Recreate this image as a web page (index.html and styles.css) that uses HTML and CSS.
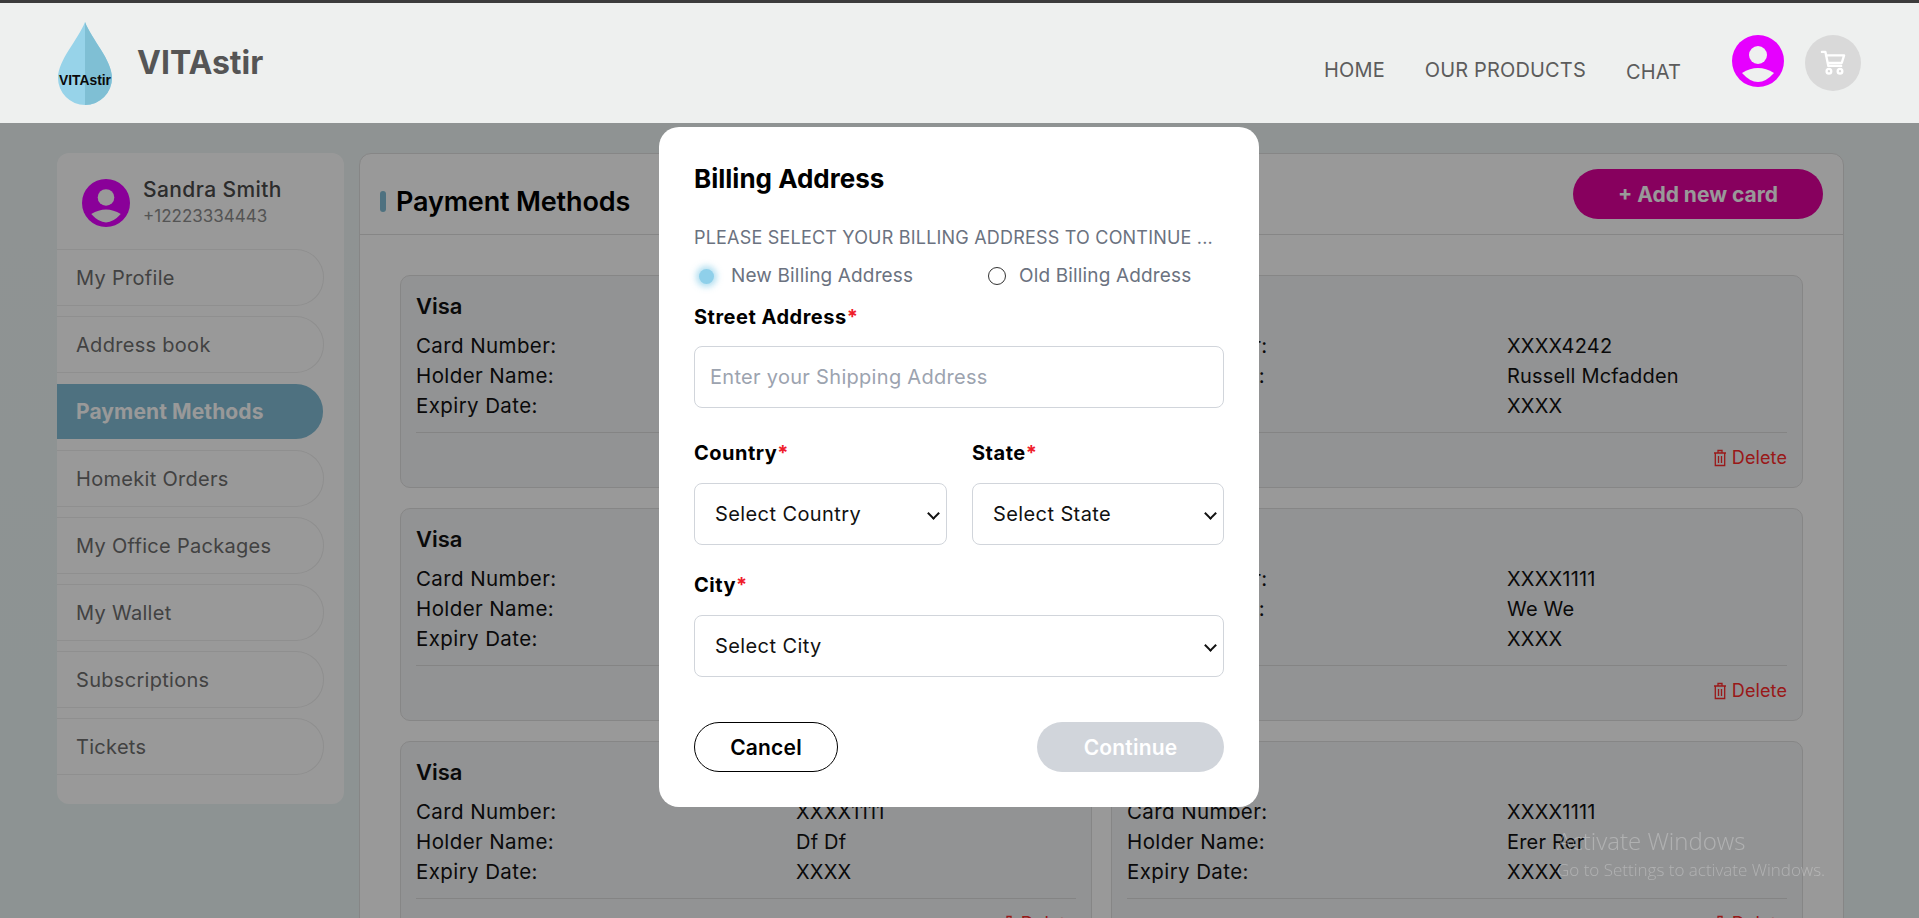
FILE: index.html
```html
<!DOCTYPE html>
<html lang="en">
<head>
    <meta charset="UTF-8">
    <meta name="viewport" content="width=device-width, initial-scale=1.0">
    <title>VITAstir - Payment Methods</title>

    <link rel="stylesheet" href="styles.css">
</head>
<body>

    <header class="topbar">
        <svg class="logo" viewBox="0 0 54 83" width="54" height="83">
            <path d="M27 0C20 18 0 38 0 56a27 27 0 0 0 54 0C54 38 34 18 27 0Z" fill="#97d3e9"/>
            <path d="M27 0C34 18 54 38 54 56a27 27 0 0 1-27 27Z" fill="#7fbfd4"/>
            <text x="1" y="63" class="logo-text" textLength="52" lengthAdjust="spacingAndGlyphs">VITAstir</text>
        </svg>
        <div class="brand">VITAstir</div>
        <nav class="nav">
            <a href="#">HOME</a>
            <a href="#">OUR PRODUCTS</a>
            <a href="#" class="nav-chat">CHAT</a>
        </nav>
        <svg class="profile-icon" viewBox="0 0 52 52" width="52" height="52">
            <circle cx="26" cy="26" r="26" fill="#e600ff"/>
            <circle cx="26" cy="20" r="9" fill="#eef0ef"/>
            <path d="M10 38Q26 28 42 38Q34 47 26 47Q18 47 10 38Z" fill="#eef0ef"/>
        </svg>
        <div class="cart">
            <svg viewBox="0 0 24 24" width="28" height="28" fill="none" stroke="#fff" stroke-width="2" stroke-linecap="round" stroke-linejoin="round">
                <path d="M2.500 2.500h3l2.500 12h11M6 5.500h15.500l-2 6.500H7.500"/>
                <circle cx="8.500" cy="19" r="2"/>
                <circle cx="18" cy="19" r="2"/>
            </svg>
        </div>
    </header>

    <div class="page">
        <aside class="sidebar">
            <div class="user">
                <svg viewBox="0 0 52 52" width="48" height="48">
                    <circle cx="26" cy="26" r="26" fill="#e600ff"/>
                    <circle cx="26" cy="20" r="9" fill="#fff"/>
                    <path d="M10 38Q26 28 42 38Q34 47 26 47Q18 47 10 38Z" fill="#fff"/>
                </svg>
                <div>
                    <div class="user-name">Sandra Smith</div>
                    <div class="user-phone">+12223334443</div>
                </div>
            </div>
            <a href="#" class="side-link">My Profile</a>
            <a href="#" class="side-link">Address book</a>
            <a href="#" class="side-link active">Payment Methods</a>
            <a href="#" class="side-link">Homekit Orders</a>
            <a href="#" class="side-link">My Office Packages</a>
            <a href="#" class="side-link">My Wallet</a>
            <a href="#" class="side-link">Subscriptions</a>
            <a href="#" class="side-link">Tickets</a>
        </aside>

        <main class="panel">
            <div class="panel-head">
                <h2 class="panel-title">Payment Methods</h2>
                <button class="add-card">+ Add new card</button>
            </div>
            <div class="cards">
                <div class="card">
                    <div class="card-type">Visa</div>
                    <div class="card-rows">
                        <span>Card Number:</span><span></span>
                        <span>Holder Name:</span><span></span>
                        <span>Expiry Date:</span><span></span>
                    </div>
                </div>
                <div class="card">
                    <div class="card-type">Visa</div>
                    <div class="card-rows">
                        <span>Card Number:</span><span>XXXX4242</span>
                        <span>Holder Name:</span><span>Russell Mcfadden</span>
                        <span>Expiry Date:</span><span>XXXX</span>
                    </div>
                    <div class="card-foot"><a href="#" class="delete">
                        <svg viewBox="0 0 14 18" width="14" height="18" fill="none" stroke="currentColor" stroke-width="1.300"><path d="M1 4h12M5 4V1.500h4V4M2.300 4v12.500h9.400V4M5.500 7v7M8.500 7v7"/></svg>
                        Delete</a></div>
                </div>
                <div class="card">
                    <div class="card-type">Visa</div>
                    <div class="card-rows">
                        <span>Card Number:</span><span></span>
                        <span>Holder Name:</span><span></span>
                        <span>Expiry Date:</span><span></span>
                    </div>
                </div>
                <div class="card">
                    <div class="card-type">Visa</div>
                    <div class="card-rows">
                        <span>Card Number:</span><span>XXXX1111</span>
                        <span>Holder Name:</span><span>We We</span>
                        <span>Expiry Date:</span><span>XXXX</span>
                    </div>
                    <div class="card-foot"><a href="#" class="delete">
                        <svg viewBox="0 0 14 18" width="14" height="18" fill="none" stroke="currentColor" stroke-width="1.300"><path d="M1 4h12M5 4V1.500h4V4M2.300 4v12.500h9.400V4M5.500 7v7M8.500 7v7"/></svg>
                        Delete</a></div>
                </div>
                <div class="card">
                    <div class="card-type">Visa</div>
                    <div class="card-rows">
                        <span>Card Number:</span><span>XXXX1111</span>
                        <span>Holder Name:</span><span>Df Df</span>
                        <span>Expiry Date:</span><span>XXXX</span>
                    </div>
                    <div class="card-foot"><a href="#" class="delete">
                        <svg viewBox="0 0 14 18" width="14" height="18" fill="none" stroke="currentColor" stroke-width="1.300"><path d="M1 4h12M5 4V1.500h4V4M2.300 4v12.500h9.400V4M5.500 7v7M8.500 7v7"/></svg>
                        Delete</a></div>
                </div>
                <div class="card">
                    <div class="card-type">Visa</div>
                    <div class="card-rows">
                        <span>Card Number:</span><span>XXXX1111</span>
                        <span>Holder Name:</span><span>Erer Rer</span>
                        <span>Expiry Date:</span><span>XXXX</span>
                    </div>
                    <div class="card-foot"><a href="#" class="delete">
                        <svg viewBox="0 0 14 18" width="14" height="18" fill="none" stroke="currentColor" stroke-width="1.300"><path d="M1 4h12M5 4V1.500h4V4M2.300 4v12.500h9.400V4M5.500 7v7M8.500 7v7"/></svg>
                        Delete</a></div>
                </div>
            </div>
        </main>
    </div>

    <div class="overlay">
        <form class="modal">
            <h3 class="modal-title">Billing Address</h3>
            <p class="modal-sub">PLEASE SELECT YOUR BILLING ADDRESS TO CONTINUE ...</p>
            <div class="radios">
                <label class="radio"><input type="radio" name="billing" class="radio-new" checked> New Billing Address</label>
                <label class="radio"><input type="radio" name="billing"> Old Billing Address</label>
            </div>

            <label class="field-label street-label">Street Address<span class="req">*</span></label>
            <input class="control" type="text" placeholder="Enter your Shipping Address">

            <div class="two-col">
                <div>
                    <label class="field-label">Country<span class="req">*</span></label>
                    <div class="select-wrap"><select class="control"><option>Select Country</option></select></div>
                </div>
                <div>
                    <label class="field-label">State<span class="req">*</span></label>
                    <div class="select-wrap"><select class="control"><option>Select State</option></select></div>
                </div>
            </div>

            <label class="field-label city-label">City<span class="req">*</span></label>
            <div class="select-wrap"><select class="control"><option>Select City</option></select></div>

            <div class="modal-actions">
                <button type="button" class="btn-cancel">Cancel</button>
                <button type="button" class="btn-continue">Continue</button>
            </div>
        </form>

        <div class="watermark">
            <div class="watermark-big">Activate Windows</div>
            <div class="watermark-small">Go to Settings to activate Windows.</div>
        </div>
    </div>

</body>
</html>
```

FILE: styles.css
```css
* {
    box-sizing: border-box;
}
html, body {
    height: 100%;
    overflow: hidden;
}
body {
    font-family: Inter, "Noto Sans", sans-serif;
    margin: 0;
    padding: 0;
    background: linear-gradient(180deg, #eff5f5, #ebf6f5);
    color: #111;
}
a {
    color: inherit;
    text-decoration: none;
}

/* header sits above the dark overlay */
.topbar {
    position: relative;
    z-index: 20;
    display: flex;
    align-items: center;
    height: 123px;
    border-top: 3px solid #3c3c3c;
    background-color: #eef0ef;
    padding: 0 58px;
}
.logo {
    flex: none;
    overflow: visible;
}
.logo-text {
    font-family: "Liberation Sans", sans-serif;
    font-size: 15px;
    font-weight: 700;
    fill: #0a0a0a;
}
.brand {
    margin-left: 25px;
    margin-bottom: 2px;
    font-size: 32px;
    font-weight: 700;
    color: #555;
}
.nav {
    display: flex;
    gap: 40px;
    margin-left: auto;
    margin-top: 16px;
    font-size: 20px;
    letter-spacing: 0.15px;
    color: #5c5c5c;
}
.nav-chat {
    margin-top: 2px;
}
.profile-icon {
    flex: none;
    align-self: flex-start;
    margin-top: 32px;
    margin-left: 51px;
}
.cart {
    flex: none;
    align-self: flex-start;
    display: flex;
    align-items: center;
    justify-content: center;
    width: 56px;
    height: 56px;
    margin-top: 32px;
    margin-left: 21px;
    border-radius: 50%;
    background-color: #d9d9d9;
}

.page {
    display: flex;
    align-items: flex-start;
    gap: 15px;
    padding: 30px 75px 0 57px;
}

.sidebar {
    flex: none;
    width: 287px;
    padding: 24px 0 19px;
    background-color: #fff;
    border-radius: 12px;
}
.user {
    display: flex;
    align-items: center;
    gap: 13px;
    padding-left: 25px;
    margin-bottom: 20px;
}
.user-name {
    font-size: 21px;
    font-weight: 500;
    letter-spacing: 0.4px;
    color: #4a4a4a;
    line-height: 26px;
}
.user-phone {
    font-size: 17px;
    color: #8c8c8c;
    line-height: 26px;
}
.side-link {
    display: flex;
    align-items: center;
    width: 267px;
    height: 57px;
    margin-bottom: 10px;
    padding-left: 19px;
    font-size: 20px;
    letter-spacing: 0.3px;
    color: #6e6e6e;
    border: 1px solid #eee;
    border-left: none;
    border-radius: 0 28px 28px 0;
}
.side-link.active {
    background-color: #82bdd5;
    background-clip: padding-box;
    border-color: transparent;
    color: #fff;
    font-size: 21px;
    font-weight: 700;
    letter-spacing: 0.1px;
}

.panel {
    flex: 1;
    background-color: #fff;
    border: 1px solid #e0e0e0;
    border-radius: 12px 12px 0 0;
}
.panel-head {
    display: flex;
    align-items: center;
    justify-content: space-between;
    height: 81px;
    padding: 0 20px;
    border-bottom: 1px solid #e0e0e0;
}
.panel-title {
    display: flex;
    align-items: center;
    gap: 10px;
    margin: 15px 0 0;
    font-size: 27px;
    font-weight: 600;
    letter-spacing: -0.15px;
    color: #000;
}
.panel-title::before {
    content: "";
    width: 6px;
    height: 21px;
    border-radius: 3px;
    background-color: #82bdd5;
}
.add-card {
    width: 250px;
    height: 50px;
    border: none;
    border-radius: 25px;
    background-color: #e1009d;
    color: #fff;
    font-family: inherit;
    font-size: 21px;
    font-weight: 700;
}

.cards {
    display: grid;
    grid-template-columns: 1fr 1fr;
    gap: 20px 19px;
    padding: 40px;
}
.card {
    height: 213px;
    padding: 17px 15px 0;
    background-color: #f4f5f7;
    border: 1px solid #e0e0e0;
    border-radius: 10px;
}
.card-type {
    font-size: 22px;
    font-weight: 600;
    line-height: 26px;
    color: #111;
}
.card-rows {
    display: grid;
    grid-template-columns: 380px 1fr;
    grid-auto-rows: 30px;
    margin-top: 12px;
    padding-bottom: 11px;
    border-bottom: 1px solid #dcdcdc;
    font-size: 20px;
    line-height: 30px;
    letter-spacing: 0.2px;
}
.card-rows span:nth-child(odd) {
    font-size: 20.500px;
    letter-spacing: 0.4px;
}
.card-foot {
    display: flex;
    justify-content: flex-end;
    padding-top: 14px;
}
.delete {
    display: flex;
    align-items: center;
    gap: 5px;
    font-size: 18px;
    line-height: 22px;
    letter-spacing: 0.1px;
    color: #ff2a2a;
}

.overlay {
    position: fixed;
    top: 0;
    left: 0;
    right: 0;
    bottom: 0;
    z-index: 10;
    display: flex;
    justify-content: center;
    align-items: flex-start;
    padding: 127px 1px 0 0;
    background-color: rgba(0, 0, 0, 0.4);
}
.modal {
    width: 600px;
    height: 680px;
    padding: 35px;
    background-color: #fff;
    border-radius: 20px;
}
.modal-title {
    margin: 0;
    font-size: 26px;
    font-weight: 700;
    line-height: 34px;
    color: #000;
}
.modal-sub {
    margin: 29px 0 0;
    font-size: 18px;
    letter-spacing: 0.2px;
    line-height: 26px;
    color: #6b7280;
}
.radios {
    display: grid;
    grid-template-columns: 294px 1fr;
    margin-top: 12px;
}
.radio {
    display: flex;
    align-items: center;
    gap: 13px;
    font-size: 19px;
    letter-spacing: 0.15px;
    line-height: 26px;
    color: #6b7280;
}
.radio input {
    appearance: none;
    width: 18px;
    height: 18px;
    margin: 0;
    border: 1px solid #333;
    border-radius: 50%;
    background-color: #fff;
}
.radio input.radio-new {
    width: 15px;
    height: 15px;
    margin: 0 4px 0 5px;
    border: none;
    background-color: #8fd0ea;
    box-shadow: 0 0 6px 3px rgba(143, 208, 234, 0.7);
}
.field-label {
    display: block;
    margin-bottom: 17px;
    font-size: 20px;
    font-weight: 700;
    letter-spacing: 0.5px;
    line-height: 26px;
    color: #000;
}
.street-label {
    margin-top: 15px;
    margin-bottom: 16px;
}
.city-label {
    margin-top: 27px;
}
.req {
    color: #ef1c2b;
}
.control {
    display: block;
    width: 100%;
    height: 62px;
    padding: 0 15px;
    border: 1px solid #d1d5db;
    border-radius: 8px;
    background-color: #fff;
    font-family: inherit;
    font-size: 20px;
    letter-spacing: 0.3px;
    color: #111;
}
.control::placeholder {
    color: #9ca3af;
}
select.control {
    appearance: none;
    padding-left: 20px;
    letter-spacing: 0.4px;
}
.select-wrap {
    position: relative;
}
.select-wrap::after {
    content: "";
    position: absolute;
    top: 50%;
    right: 9px;
    width: 7px;
    height: 7px;
    margin-top: -5px;
    border-right: 2px solid #111;
    border-bottom: 2px solid #111;
    transform: rotate(45deg);
}
.two-col {
    display: grid;
    grid-template-columns: 253px 252px;
    gap: 25px;
    margin-top: 32px;
}
.modal-actions {
    display: flex;
    justify-content: space-between;
    margin-top: 45px;
}
.btn-cancel, .btn-continue {
    height: 50px;
    border-radius: 25px;
    font-family: inherit;
    font-size: 21px;
    font-weight: 600;
    letter-spacing: 0.2px;
}
.btn-cancel {
    width: 144px;
    border: 1px solid #000;
    background-color: #fff;
    color: #000;
}
.btn-continue {
    width: 187px;
    border: none;
    background-color: #d1d5db;
    color: #fff;
}

.watermark {
    position: absolute;
    left: 1557px;
    top: 825px;
    font-family: "Open Sans", sans-serif;
    color: rgba(255, 255, 255, 0.28);
}
.watermark-big {
    font-size: 24px;
    font-weight: 300;
    line-height: 32px;
}
.watermark-small {
    margin-top: 2px;
    font-size: 17px;
    font-weight: 300;
    line-height: 22px;
}
```
